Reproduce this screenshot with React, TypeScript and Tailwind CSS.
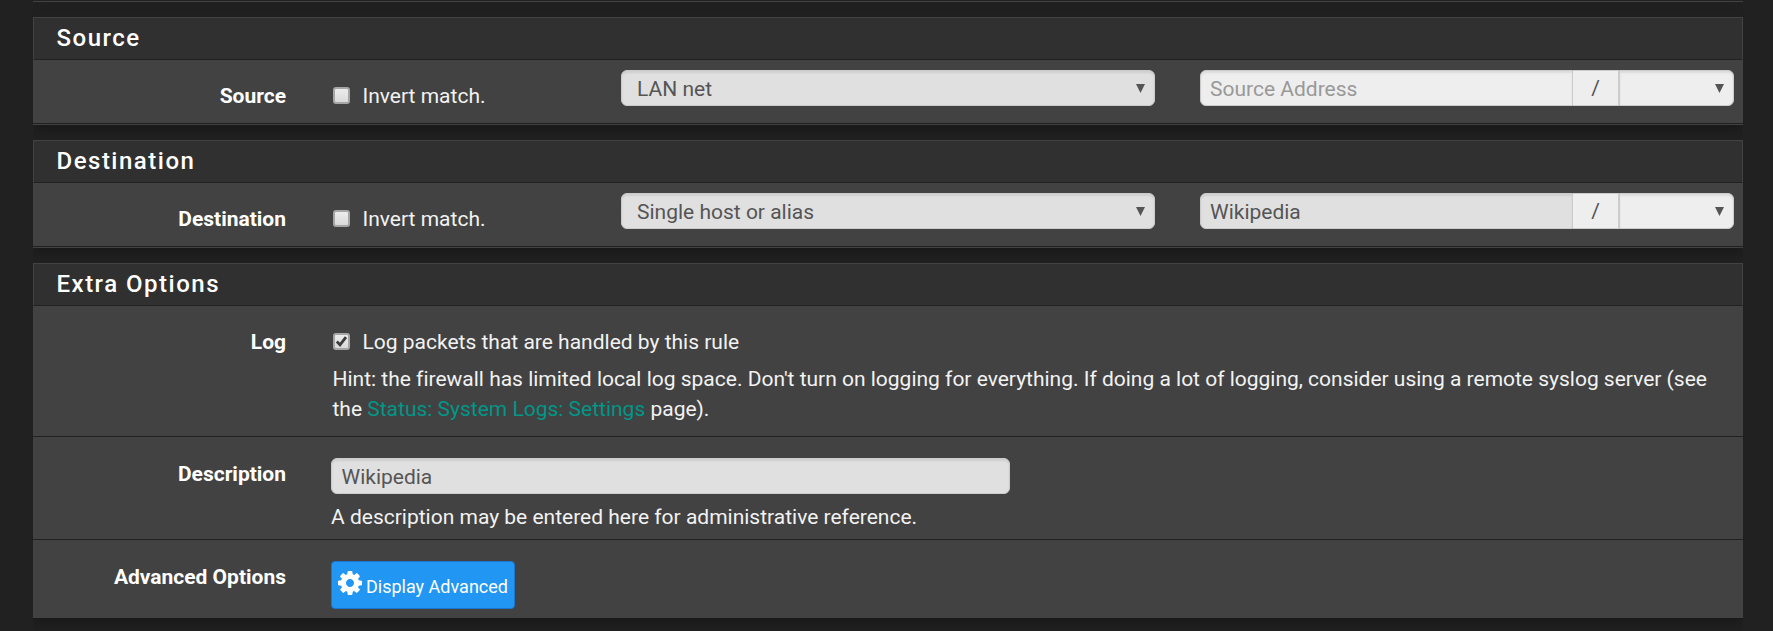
import type { ReactNode } from "react";

const FIELD =
  "h-9 border border-[#ccc] pt-px text-[21px] leading-[32px] text-[#555] outline-none appearance-none shadow-[inset_0_2px_2px_rgba(0,0,0,0.075)]";

const COG_PATH =
  "M1024 896q0-106-75-181t-181-75-181 75-75 181 75 181 181 75 181-75 75-181zM1536 787v222q0 12-8 23t-20 13l-185 28q-19 54-39 91 35 50 107 138 10 12 10 25t-9 23q-27 37-99 108t-94 71q-12 0-26-9l-138-108q-44 23-91 38-16 136-29 186-7 28-36 28h-222q-14 0-24.5-8.5t-11.5-21.5l-28-184q-49-16-90-37l-141 107q-10 9-25 9-14 0-25-11-126-114-165-168-7-10-7-23 0-12 8-23 15-21 51-66.5t54-70.5q-27-50-41-99l-183-27q-13-2-21-12.5t-8-23.5v-222q0-12 8-23t19-13l186-28q14-46 39-92-40-57-107-138-10-12-10-24 0-10 9-23 26-36 98.5-107.5t94.5-71.5q13 0 26 10l138 107q44-23 91-38 16-136 29-186 7-28 36-28h222q14 0 24.5 8.5t11.5 21.5l28 184q49 16 90 37l142-107q9-9 24-9 13 0 25 10 129 119 165 170 7 8 7 22 0 12-8 23-15 21-51 66.5t-54 70.5q26 50 41 98l183 28q13 2 21 12.5t8 23.5z";

function Caret() {
  return (
    <svg className="pointer-events-none absolute top-[14px] right-[10px]" width="9" height="9" viewBox="0 0 9 9">
      <path d="M0 0H9L4.5 9Z" fill="#555" />
    </svg>
  );
}

function Checkbox({ checked = false, label }: { checked?: boolean; label: string }) {
  return (
    <label className="flex items-start">
      <span className="relative mt-[6px] mr-[12.5px] block h-[17px] w-[17px] rounded-[3px] border-2 border-[#a6a6a6] bg-[#dedede] bg-linear-to-b from-[#ececec] to-[#dadada]">
        {checked && (
          <svg className="absolute -top-px -left-px" width="15" height="15" viewBox="0 0 15 15">
            <path d="M2.8 7.6L6 10.8L12 3.2" fill="none" stroke="#3c3c3c" strokeWidth="2.8" />
          </svg>
        )}
      </span>
      {label}
    </label>
  );
}

function Panel({ title, children }: { title: string; children: ReactNode }) {
  return (
    <section className="mb-[15px] shadow-[0_6px_12px_rgba(0,0,0,0.26)] [clip-path:inset(0_0_-15px_0)]">
      <h2 className="h-[43px] border border-[#424242] border-b-[#212121] bg-[#303030] pl-[22.5px] text-[24px] leading-[41px] font-medium tracking-[1.5px] text-white">
        {title}
      </h2>
      <div className="bg-[#424242]">{children}</div>
    </section>
  );
}

function Label({ children }: { children: ReactNode }) {
  return <div className="w-[253px] shrink-0 text-right font-bold text-white">{children}</div>;
}

function AddressRow({ label, type, placeholder, value }: { label: string; type: string; placeholder?: string; value: string }) {
  return (
    <div className="h-[65px]">
      <div className="flex h-[64px] items-start border-b border-[#212121]">
        <div className="pt-[21px]">
          <Label>{label}</Label>
        </div>
        <div className="ml-[47px] w-[288px] pt-[21px]">
          <Checkbox label="Invert match." />
        </div>
        <div className="relative mt-[10px] w-[534px]">
          <select className={`${FIELD} block w-full rounded-[6px] bg-[#e0e0e0] pl-[15px]`}>
            <option>{type}</option>
          </select>
          <Caret />
        </div>
        <div className="mt-[10px] ml-[45px] flex w-[534px]">
          <input
            className={`${FIELD} w-[373px] rounded-l-[6px] px-[9px] placeholder:text-[#999] placeholder:opacity-100 ${value ? "bg-[#e0e0e0]" : "bg-[#eee]"}`}
            placeholder={placeholder}
            defaultValue={value}
          />
          <span className="h-9 w-[46px] border-y border-r border-[#ccc] bg-[#eee] text-center leading-[34px] text-[#555]">/</span>
          <div className="relative w-[115px]">
            <select className={`${FIELD} block w-full rounded-r-[6px] bg-[#eee]`} />
            <Caret />
          </div>
        </div>
      </div>
    </div>
  );
}

export default function App() {
  return (
    <main className="h-[631px] overflow-hidden bg-[#212121] font-[Roboto,sans-serif] text-[21px] leading-[30px] text-[#f2f2f2]">
      <div className="ml-[33px] w-[1710px]">
        <div className="mb-[15px] h-[2px] border-b border-[#424242] bg-[#212121] shadow-[0_6px_12px_rgba(0,0,0,0.26)] [clip-path:inset(0_0_-15px_0)]" />
        <Panel title="Source">
          <AddressRow label="Source" type="LAN net" placeholder="Source Address" value="" />
        </Panel>
        <Panel title="Destination">
          <AddressRow label="Destination" type="Single host or alias" value="Wikipedia" />
        </Panel>
        <Panel title="Extra Options">
          <div className="flex h-[131px] items-start border-b border-[#212121] pt-[21px]">
            <Label>Log</Label>
            <div className="ml-[47px] w-[1390px]">
              <Checkbox checked label="Log packets that are handled by this rule" />
              <p className="mt-[7px] -ml-[0.5px] tracking-[-0.005px]">
                Hint: the firewall has limited local log space. Don't turn on logging for everything. If doing a lot of logging, consider using a remote syslog server (see
                the <a className="text-[#009688]">Status: System Logs: Settings</a> page).
              </p>
            </div>
          </div>
          <div className="flex h-[103px] items-start border-b border-[#212121] pt-[21px]">
            <div className="pt-px">
              <Label>Description</Label>
            </div>
            <div className="ml-[45px]">
              <input className={`${FIELD} block w-[679px] rounded-[6px] bg-[#e0e0e0] px-[9.5px]`} defaultValue="Wikipedia" />
              <p className="mt-[8px]">A description may be entered here for administrative reference.</p>
            </div>
          </div>
          <div className="flex h-[78px] items-start pt-[21px]">
            <div className="pt-px">
              <Label>Advanced Options</Label>
            </div>
            <button className="ml-[45px] flex h-[48px] w-[184px] items-start rounded-[4px] border border-[#1976d2] bg-[#2196f3] pl-[6px] text-[18px] leading-[27px] text-white">
              <svg className="mt-[9px] mr-[4px] h-[24px] w-[24px] shrink-0" viewBox="0 128 1536 1536" fill="currentColor">
                <path d={COG_PATH} />
              </svg>
              <span className="mt-[11px] whitespace-nowrap">Display Advanced</span>
            </button>
          </div>
        </Panel>
      </div>
    </main>
  );
}
